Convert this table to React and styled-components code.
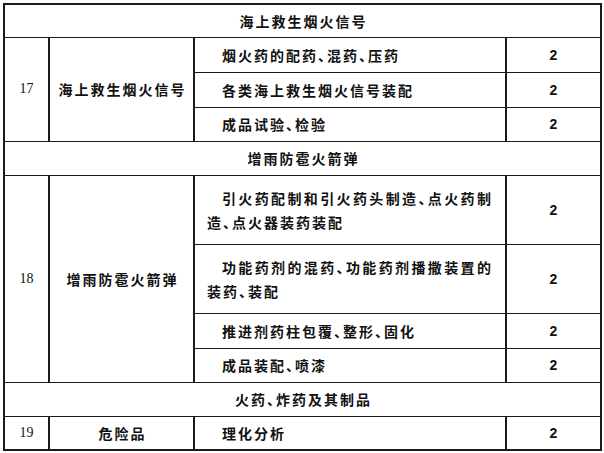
import React from "react";
import styled, { createGlobalStyle } from "styled-components";

const Global = createGlobalStyle`
  html, body { margin: 0; padding: 0; background: #fff; }
  body { width: 604px; height: 453px; overflow: hidden; }
`;

const Page = styled.div`
  padding: 3px 0 0 3px;
`;

const Table = styled.table`
  border-collapse: collapse;
  table-layout: fixed;
  width: 597px;
  font-family: "Noto Sans CJK SC", "Noto Sans", sans-serif;
  font-size: 14px;
  font-weight: 700;
  font-feature-settings: "halt";
  color: #111;
  border: 2px solid #1a1a1a;
`;

const Row = styled.tr`
  height: ${(p) => p.$h}px;
`;

const Cell = styled.td`
  padding: 0;
  border-top: 1px solid #1a1a1a;
  border-bottom: 1px solid #1a1a1a;
  border-left: 2px solid #1a1a1a;
  border-right: 2px solid #1a1a1a;
  vertical-align: middle;
  line-height: 24px;
`;

const SectionCell = styled(Cell)`
  text-align: center;
  letter-spacing: 2px;
  padding-left: 2px;
`;

const NumCell = styled(Cell)`
  text-align: center;
  font-family: "Liberation Serif", serif;
  font-weight: 400;
  font-size: 14px;
`;

const NameCell = styled(Cell)`
  text-align: center;
  letter-spacing: 2px;
  padding-left: 2px;
`;

const ItemCell = styled(Cell)`
  padding: 0 12px;
  letter-spacing: 2px;
`;

const Line = styled.div`
  text-indent: ${(p) => (p.$first ? "15px" : "0")};
  text-align: justify;
  text-align-last: ${(p) => (p.$fill ? "justify" : "left")};
  white-space: nowrap;
`;

const ScoreCell = styled(Cell)`
  text-align: center;
  font-family: "Liberation Sans", Arial, sans-serif;
  font-weight: 700;
  font-size: 14px;
`;

const groups = [
  {
    title: "海上救生烟火信号",
    no: "17",
    name: "海上救生烟火信号",
    titleH: 33,
    items: [
      { lines: ["烟火药的配药、混药、压药"], h: 35 },
      { lines: ["各类海上救生烟火信号装配"], h: 35 },
      { lines: ["成品试验、检验"], h: 34 },
    ],
  },
  {
    title: "增雨防雹火箭弹",
    no: "18",
    name: "增雨防雹火箭弹",
    titleH: 34,
    items: [
      { lines: ["引火药配制和引火药头制造、点火药制", "造、点火器装药装配"], h: 69 },
      { lines: ["功能药剂的混药、功能药剂播撒装置的", "装药、装配"], h: 69 },
      { lines: ["推进剂药柱包覆、整形、固化"], h: 35 },
      { lines: ["成品装配、喷漆"], h: 34 },
    ],
  },
  {
    title: "火药、炸药及其制品",
    no: "19",
    name: "危险品",
    titleH: 34,
    items: [{ lines: ["理化分析"], h: 34 }],
  },
];

export default function App() {
  return (
    <Page>
      <Global />
      <Table>
        <colgroup>
          <col style={{ width: 45 }} />
          <col style={{ width: 145 }} />
          <col style={{ width: 312 }} />
          <col style={{ width: 95 }} />
        </colgroup>
        <tbody>
          {groups.map((g) => (
            <React.Fragment key={g.no}>
              <Row $h={g.titleH}>
                <SectionCell colSpan={4}>{g.title}</SectionCell>
              </Row>
              {g.items.map((it, i) => (
                <Row $h={it.h} key={i}>
                  {i === 0 && (
                    <>
                      <NumCell rowSpan={g.items.length}>{g.no}</NumCell>
                      <NameCell rowSpan={g.items.length}>{g.name}</NameCell>
                    </>
                  )}
                  <ItemCell>
                    {it.lines.map((l, j) => (
                      <Line
                        key={j}
                        $first={j === 0}
                        $fill={it.lines.length > 1 && j < it.lines.length - 1}
                      >
                        {l}
                      </Line>
                    ))}
                  </ItemCell>
                  <ScoreCell>2</ScoreCell>
                </Row>
              ))}
            </React.Fragment>
          ))}
        </tbody>
      </Table>
    </Page>
  );
}
